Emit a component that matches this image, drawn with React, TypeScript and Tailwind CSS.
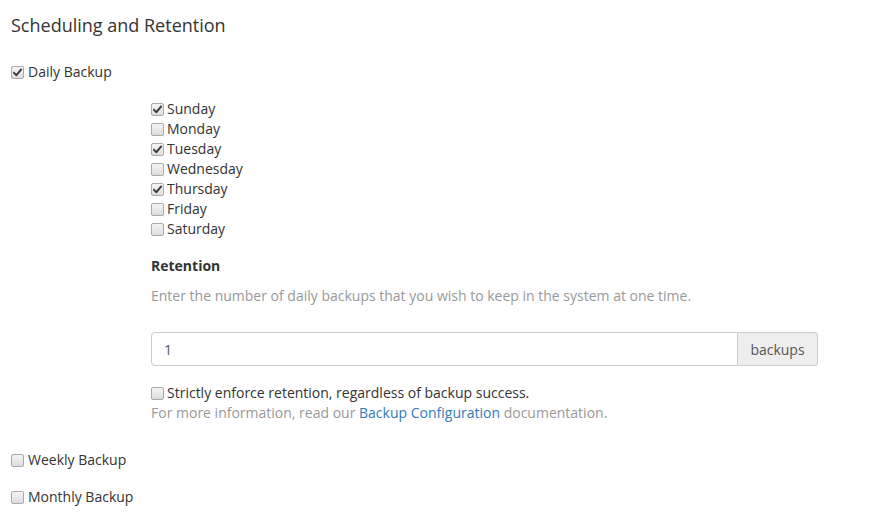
import React from "react";

function Box({ checked }: { checked?: boolean }) {
  return (
    <span className="inline-flex h-[13px] w-[13px] shrink-0 items-center justify-center rounded-[2px] border border-[#a9a9a9] bg-gradient-to-b from-[#f4f4f4] to-[#dedede]">
      {checked && (
        <svg width="9" height="9" viewBox="0 0 9 9">
          <path d="M1 4.8 L3.4 7.2 L8 1.6" fill="none" stroke="#3a3a3a" strokeWidth="1.9" strokeLinecap="square" />
        </svg>
      )}
    </span>
  );
}

function Check({ label, checked, className = "" }: { label: string; checked?: boolean; className?: string }) {
  return (
    <label className={`flex h-[20px] items-center text-[14px] leading-[20px] text-[#333] ${className}`}>
      <Box checked={checked} />
      <span>{label}</span>
    </label>
  );
}

export default function App() {
  const days: [string, boolean][] = [
    ["Sunday", true],
    ["Monday", false],
    ["Tuesday", true],
    ["Wednesday", false],
    ["Thursday", true],
    ["Friday", false],
    ["Saturday", false],
  ];
  return (
    <div className="min-h-[531px] w-[889px] bg-white pl-[11px] pt-[12px] font-['Open_Sans',sans-serif] text-[#333]">
      <h2 className="text-[18px] leading-[26px] font-normal">Scheduling and Retention</h2>
      <Check label="Daily Backup" checked className="mt-[24px] gap-[4px]" />
      <div className="ml-[140px] mt-[17px]">
        {days.map(([d, c]) => (
          <Check key={d} label={d} checked={c} className="gap-[3px]" />
        ))}
        <div className="mt-[17px] text-[14px] font-bold leading-[20px]">Retention</div>
        <p className="mt-[10px] text-[14px] leading-[20px] text-[#999]">
          Enter the number of daily backups that you wish to keep in the system at one time.
        </p>
        <div className="mt-[26px] flex h-[34px] w-[667px]">
          <div className="flex flex-1 items-center rounded-l-[4px] border border-[#ccc] px-[12px] text-[14px] text-[#555]">1</div>
          <div className="flex w-[80px] items-center justify-center rounded-r-[4px] border border-l-0 border-[#ccc] bg-[#eee] text-[14px] text-[#555]">
            backups
          </div>
        </div>
        <Check label="Strictly enforce retention, regardless of backup success." className="mt-[17px] gap-[3px]" />
        <p className="text-[14px] leading-[20px] text-[#999]">
          For more information, read our <span className="text-[#337ab7]">Backup Configuration</span> documentation.
        </p>
      </div>
      <Check label="Weekly Backup" className="mt-[27px] gap-[4px]" />
      <Check label="Monthly Backup" className="mt-[17px] gap-[4px]" />
    </div>
  );
}
